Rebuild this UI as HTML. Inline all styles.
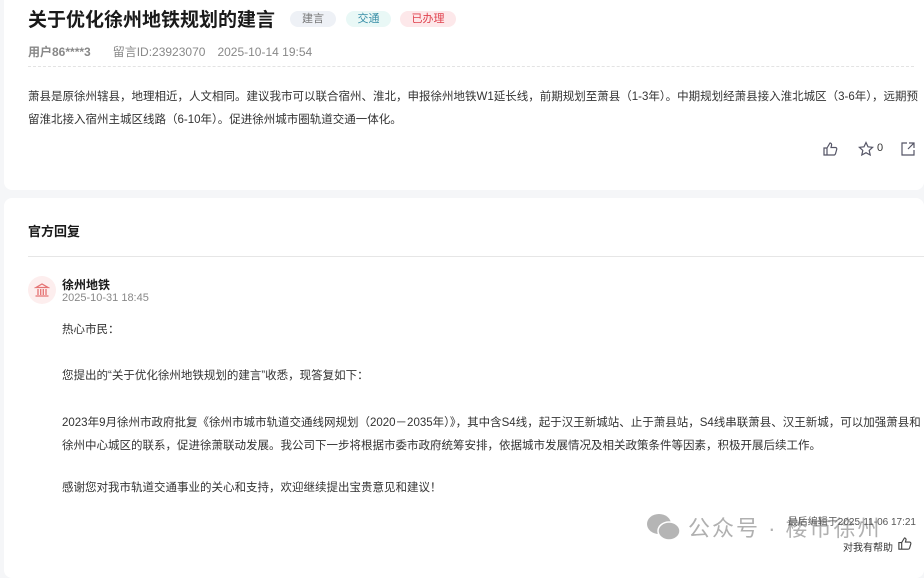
<!DOCTYPE html><html><head><meta charset="utf-8"><style>
body{margin:0;width:924px;height:564px;overflow:hidden;background:#f5f6f8;font-family:"Liberation Sans","Noto Sans CJK SC",sans-serif;color:#333;position:relative}
.card{position:absolute;left:4px;right:0;background:#fff;border-radius:8px}
.t{position:absolute;white-space:nowrap}
.tag{position:absolute;top:11px;height:16px;line-height:16px;font-size:11px;border-radius:8px;text-align:center}
</style></head><body>
<div class="card" style="top:-10px;height:200px"></div>
<div class="card" style="top:198px;height:380px"></div>
<div class="t" style="left:28px;top:5px;font-size:19px;font-weight:bold;color:#1a1a1a">关于优化徐州地铁规划的建言</div>
<div class="tag" style="left:290px;width:46px;background:#eef1f6;color:#777">建言</div>
<div class="tag" style="left:346px;width:45px;background:#e9f8f6;color:#3a8fa8">交通</div>
<div class="tag" style="left:400px;width:56px;background:#fde8ea;color:#e0424e">已办理</div>
<div class="t" style="left:28px;top:43px;font-size:12px;color:#888"><b style="color:#888">用户86****3</b><span style="margin-left:22px">留言ID:23923070</span><span style="margin-left:12px">2025-10-14 19:54</span></div>
<div style="position:absolute;left:28px;right:10px;top:66px;border-top:1px dashed #e3e3e3"></div>
<div class="t" style="left:28px;top:86px;font-size:11.5px;line-height:23px;color:#333;white-space:normal;width:890px">萧县是原徐州辖县，地理相近，人文相同。建议我市可以联合宿州、淮北，申报徐州地铁W1延长线，前期规划至萧县（1-3年）。中期规划经萧县接入淮北城区（3-6年），远期预留淮北接入宿州主城区线路（6-10年）。促进徐州城市圈轨道交通一体化。</div>
<svg style="position:absolute;left:822px;top:141px" width="16" height="16" viewBox="0 0 16 16" fill="none" stroke="#556" stroke-width="1.2"><path d="M2 7h3v7H2zM5 7l3-5c1 0 2 1 1.5 2.5L9 6.5h4.5c1 0 1.5 1 1.2 2l-1.3 4.5c-.3.7-.8 1-1.5 1H5"/></svg>
<svg style="position:absolute;left:858px;top:141px" width="16" height="16" viewBox="0 0 16 16" fill="none" stroke="#556" stroke-width="1.2"><path d="M8 1.5l2 4.3 4.6.5-3.4 3.1 1 4.6L8 11.7 3.8 14l1-4.6L1.4 6.3 6 5.8z"/></svg>
<div class="t" style="left:877px;top:142px;font-size:11px;color:#333">0</div>
<svg style="position:absolute;left:900px;top:141px" width="16" height="16" viewBox="0 0 16 16" fill="none" stroke="#556" stroke-width="1.2"><path d="M7 2H2v12h12V9M9 2h5v5M14 2L8 8"/></svg>
<div class="t" style="left:28px;top:221px;font-size:13px;font-weight:bold;color:#1a1a1a">官方回复</div>
<div style="position:absolute;left:28px;right:0;top:256px;border-top:1px solid #e6e6e6"></div>
<div style="position:absolute;left:28px;top:276px;width:28px;height:28px;border-radius:50%;background:#fdeeee"></div>
<svg style="position:absolute;left:34px;top:282px" width="16" height="16" viewBox="0 0 16 16" fill="none" stroke="#e57373" stroke-width="1.3"><path d="M2 5.5L8 2l6 3.5zM4 7v6M6.7 7v6M9.3 7v6M12 7v6M1.5 14h13"/></svg>
<div class="t" style="left:62px;top:276px;font-size:12px;font-weight:bold;color:#1a1a1a">徐州地铁</div>
<div class="t" style="left:62px;top:292px;font-size:11px;color:#888">2025-10-31 18:45</div>
<div class="t" style="left:62px;top:321px;font-size:11.5px">热心市民：</div>
<div class="t" style="left:62px;top:367px;font-size:11.5px">您提出的“关于优化徐州地铁规划的建言”收悉，现答复如下：</div>
<div class="t" style="left:62px;top:412px;font-size:11.5px;line-height:23px;white-space:normal;width:860px">2023年9月徐州市政府批复《徐州市城市轨道交通线网规划（2020－2035年）》，其中含S4线，起于汉王新城站、止于萧县站，S4线串联萧县、汉王新城，可以加强萧县和徐州中心城区的联系，促进徐萧联动发展。我公司下一步将根据市委市政府统筹安排，依据城市发展情况及相关政策条件等因素，积极开展后续工作。</div>
<div class="t" style="left:62px;top:479px;font-size:11.5px">感谢您对我市轨道交通事业的关心和支持，欢迎继续提出宝贵意见和建议！</div>
<svg style="position:absolute;left:646px;top:513px" width="36" height="30" viewBox="0 0 36 30"><ellipse cx="13" cy="11" rx="12" ry="10" fill="#b5b5b5"/><ellipse cx="23" cy="18" rx="11" ry="9" fill="#b5b5b5" stroke="#fff" stroke-width="1.5"/></svg>
<div class="t" style="left:688px;top:511px;font-size:22px;color:#b0b0b0;letter-spacing:2px">公众号 · 楼市徐州</div>
<div class="t" style="right:8px;top:513px;font-size:10px;color:#555">最后编辑于2025-11-06 17:21</div>
<div class="t" style="left:843px;top:539px;font-size:10px;color:#333">对我有帮助</div>
<svg style="position:absolute;left:897px;top:536px" width="15" height="15" viewBox="0 0 16 16" fill="none" stroke="#444" stroke-width="1.2"><path d="M2 7h3v7H2zM5 7l3-5c1 0 2 1 1.5 2.5L9 6.5h4.5c1 0 1.5 1 1.2 2l-1.3 4.5c-.3.7-.8 1-1.5 1H5"/></svg>
</body></html>
